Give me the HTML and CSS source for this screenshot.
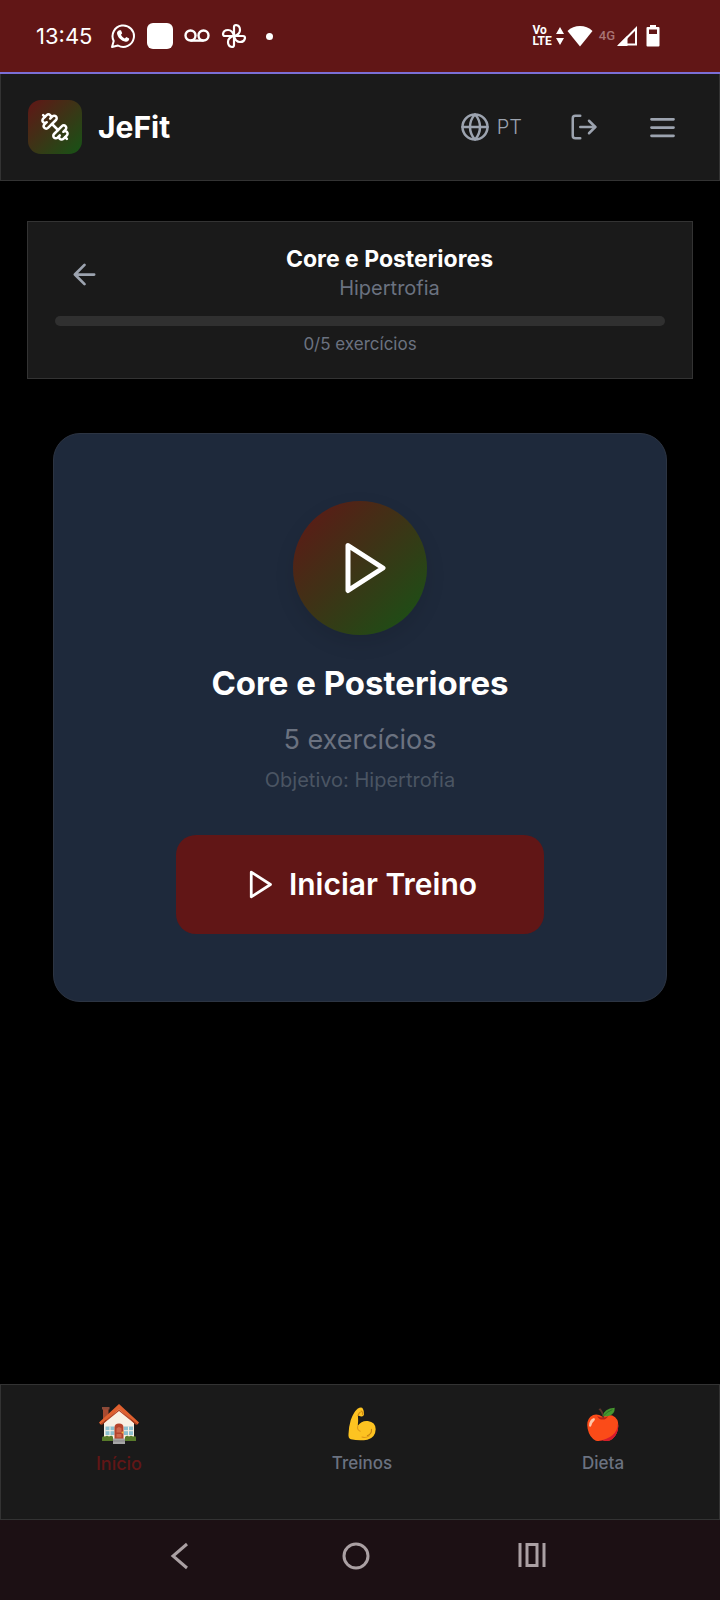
FILE: index.html
```html
<!DOCTYPE html>
<html lang="pt">
<head>
<meta charset="UTF-8">
<meta name="viewport" content="width=device-width, initial-scale=1">
<title>JeFit</title>
<link rel="stylesheet" href="styles.css">
</head>
<body>

<div class="status-bar">
  <div class="status-left">
    <span class="clock">13:45</span>
    <svg width="26" height="26" viewBox="0 0 26 26" fill="none" stroke="#fff" stroke-width="2">
      <path d="M2 24l1.700-6A10.700 10.700 0 1 1 8 22.500z" stroke-linejoin="round"/>
      <path d="M9.300 7.300l1.700 0 1.200 3-1.200 1.500c.9 1.700 2 2.800 3.800 3.700l1.500-1.500 2.900 1.500c.2 2-1.500 3.400-3.500 3.200-4.500-.7-8-4-8.700-8.400 0-1.300.8-2.700 2.300-3z" fill="#fff" stroke="none"/>
    </svg>
    <span class="app-square"></span>
    <svg width="26" height="14" viewBox="0 0 26 14" fill="none" stroke="#fff" stroke-width="2.400">
      <circle cx="6.500" cy="6.500" r="5"/>
      <circle cx="19.500" cy="6.500" r="5"/>
      <path d="M6.500 11.600h13"/>
    </svg>
    <svg width="26" height="26" viewBox="0 0 26 26" fill="none" stroke="#fff" stroke-width="2.200" stroke-linejoin="round">
      <path id="blade" d="M13 13V4q0-2 2-2 4 .5 4 5 0 4.500-6 6z"/>
      <use href="#blade" transform="rotate(90 13 13)"/>
      <use href="#blade" transform="rotate(180 13 13)"/>
      <use href="#blade" transform="rotate(270 13 13)"/>
    </svg>
    <span class="dot"></span>
  </div>
  <div class="status-right">
    <span class="volte">Vo<br>LTE</span>
    <svg class="updown" width="8" height="18" viewBox="0 0 8 18" fill="#fff"><path d="M4 0l4 7H0zM4 18l4-7H0z"/></svg>
    <svg class="wifi" width="26" height="22" viewBox="0 0 26 22" fill="#fff"><path d="M13 21.500L.5 6C7-.8 19-.8 25.500 6z"/></svg>
    <span class="net">4G</span>
    <svg class="signal" width="21" height="20" viewBox="0 0 21 20"><path d="M19 2.500V18.500H3z" fill="none" stroke="#fff" stroke-width="2"/><path d="M0 20L10.500 9.500V20z" fill="#fff"/></svg>
    <svg width="14" height="22" viewBox="0 0 14 22"><path fill="#fff" fill-rule="evenodd" d="M4 0h6v2h2.500q1 0 1 1v17.500q0 1-1 1h-11q-1 0-1-1V3q0-1 1-1H4zM3 4.500V9h8V4.500z"/></svg>
  </div>
</div>

<header class="header">
  <div class="brand">
    <span class="logo">
      <svg width="30" height="30" viewBox="0 0 24 24" class="icon">
        <path d="M14.4 14.4 9.6 9.6"/>
        <path d="M18.657 21.485a2 2 0 1 1-2.829-2.828l-1.767 1.768a2 2 0 1 1-2.829-2.829l6.364-6.364a2 2 0 1 1 2.829 2.829l-1.768 1.767a2 2 0 1 1 2.828 2.829z"/>
        <path d="m21.5 21.5-1.4-1.4"/>
        <path d="M3.9 3.9 2.5 2.5"/>
        <path d="M6.404 12.768a2 2 0 1 1-2.829-2.829l1.768-1.767a2 2 0 1 1-2.828-2.829l2.828-2.828a2 2 0 1 1 2.829 2.828l1.767-1.768a2 2 0 1 1 2.829 2.829z"/>
      </svg>
    </span>
    <h1>JeFit</h1>
  </div>
  <div class="actions">
    <button class="icon-btn lang">
      <svg width="30" height="30" viewBox="0 0 24 24" class="icon">
        <circle cx="12" cy="12" r="10"/>
        <path d="M12 2a14.5 14.5 0 0 0 0 20 14.5 14.5 0 0 0 0-20"/>
        <path d="M2 12h20"/>
      </svg>
      PT
    </button>
    <button class="icon-btn" aria-label="Sair">
      <svg width="30" height="30" viewBox="0 0 24 24" class="icon">
        <path d="M9 21H5a2 2 0 0 1-2-2V5a2 2 0 0 1 2-2h4"/>
        <path d="m16 17 5-5-5-5"/>
        <path d="M21 12H9"/>
      </svg>
    </button>
    <button class="icon-btn" aria-label="Menu">
      <svg width="33" height="33" viewBox="0 0 24 24" class="icon"><path d="M4 6h16M4 12h16M4 18h16"/></svg>
    </button>
  </div>
</header>

<main class="main">
  <section class="progress-panel">
    <div class="progress-top">
      <button class="icon-btn" aria-label="Voltar">
        <svg width="33" height="33" viewBox="0 0 24 24" class="icon"><path d="m12 19-7-7 7-7M19 12H5"/></svg>
      </button>
      <div class="progress-title">
        <h2>Core e Posteriores</h2>
        <p>Hipertrofia</p>
      </div>
    </div>
    <div class="bar" role="progressbar" aria-label="Progresso" aria-valuemin="0" aria-valuemax="5" aria-valuenow="0"></div>
    <p class="count">0/5 exercícios</p>
  </section>

  <section class="card">
    <div class="play-circle">
      <svg width="60" height="60" viewBox="0 0 24 24" class="icon"><path d="M6 3l14 9-14 9z"/></svg>
    </div>
    <h2>Core e Posteriores</h2>
    <p class="total">5 exercícios</p>
    <p class="goal">Objetivo: Hipertrofia</p>
    <button class="start">
      <svg width="33" height="33" viewBox="0 0 24 24" class="icon"><path d="M6 3l14 9-14 9z"/></svg>
      Iniciar Treino
    </button>
  </section>
</main>

<nav class="tabs">
  <a href="#inicio" class="active">
    <svg width="40" height="40" viewBox="0 0 40 40">
      <path d="M4 4h5.500v12H4z" fill="#a84a30"/>
      <path d="M3 3h7.500v2.500H3z" fill="#8c4a38"/>
      <path d="M20 4L5 19v18h30V19z" fill="#f8f0e4"/>
      <path d="M20 0L0 18.500l1.500 2L20 5.500l18.500 15 1.500-2z" fill="#e0602f"/>
      <path d="M1.500 20.500L20 5.500l18.500 15-1.500.3L20 7 3 20.800z" fill="#b9401f"/>
      <path d="M6.500 22.500h9v8.500h-9zM25 22.500h9v8.500h-9z" fill="#8cc0cf"/>
      <path d="M11 22.500v8.500M6.500 26.700h9M29.500 22.500v8.500M25 26.700h9" stroke="#f8f0e4" stroke-width="1"/>
      <path d="M15.500 35V23.500q0-4 4.500-4t4.500 4V35z" fill="#b5432b"/>
      <path d="M17.500 24.500q2.500-3 5 0v4h-5zM17.500 30h5v3.500h-5z" fill="#cf674c"/>
      <circle cx="23.500" cy="28.500" r="1" fill="#f4b742"/>
      <path d="M3 37v-3.500q1-2 3-1 2-1.500 4 0 3-1.500 4 .5v4zM26 37v-4q2-2 4-.5 2-1.500 4 0 3-1 3 1V37z" fill="#587a2a"/>
      <path d="M14 34.500h12V40H14z" fill="#a6a6a6"/>
      <path d="M14 37h12" stroke="#858585"/>
    </svg>
    <span>Início</span>
  </a>
  <a href="#treinos">
    <svg width="40" height="40" viewBox="0 0 40 40">
      <path d="M15 3q4.500-2.500 6 0 1.500 2.500 1.200 6.500-.5 2.500-3.200 2.200l-3.500-1.200q.5 6-.2 11.500 4.200-6 11.200-5.200 8.500 1.200 8.700 9-.2 9.200-9.200 11.700-9 1.500-18.500-.5-3-1.500-2.500-6 .3-8 2.500-15.500Q10.500 7 15 3z" fill="#fdc321"/>
      <path d="M15.300 22.500q-1.300 3.500 2.700 5.500M20 34.500q4 1.500 8-1.300" fill="none" stroke="#e0991a" stroke-width="1.200" stroke-linecap="round"/>
      <path d="M26 33q5-2 4.500-7" fill="none" stroke="#c68110" stroke-width="1.200" stroke-linecap="round"/>
      <path d="M19 5.500q2.500 1 1.500 4M15.500 10.500q1-3 2.500-3.500" fill="none" stroke="#d38a12" stroke-width="1.300" stroke-linecap="round"/>
    </svg>
    <span>Treinos</span>
  </a>
  <a href="#dieta">
    <svg width="40" height="40" viewBox="0 0 40 40">
      <path d="M19.500 12Q12 7 6 12q-5 5-3 13.500Q5 35 12 38.500q4 1 7.500-.5 4 1.500 8 .3 7-3 9-11.800 2-9.500-3-14-5.500-4.500-14-.5z" fill="#fb4b18"/>
      <path d="M36.500 19q0 9-6 13.500-6 5-15.500 6 2.500.3 4.500-.5 4 1.500 8 .3 7-3 9-11.800.7-4 0-7.500z" fill="#d6192e"/>
      <path d="M13.500 11q6 3.500 12.500 0-2.500 4-6.500 4t-6-4z" fill="#b91f18"/>
      <path d="M19.500 13Q19 7 15 3.500l2-1q4 4 4 10.500z" fill="#5b352c"/>
      <path d="M20 11Q21 3 33 2q.5 8-8 9.500-3 0-5-.5z" fill="#46962f"/>
      <path d="M20.500 11Q25 6 30.500 4" fill="none" stroke="#2d6d25" stroke-width="1"/>
      <path d="M4.500 22q0-7 5.500-8.700 2 .7.500 2.700-2.500 2-3.500 6-1.500 2.500-2.500 0z" fill="#ffc5a8"/>
    </svg>
    <span>Dieta</span>
  </a>
</nav>

<div class="system-nav">
  <button aria-label="Voltar">
    <svg width="28" height="28" viewBox="0 0 28 28"><path d="M21 2L7 14l14 12"/></svg>
  </button>
  <button aria-label="Tela inicial">
    <svg width="28" height="28" viewBox="0 0 28 28"><circle cx="14" cy="14" r="12"/></svg>
  </button>
  <button aria-label="Recentes">
    <svg width="28" height="28" viewBox="0 0 28 28"><path d="M2 1v24M26 1v24M9 2.500h10v21H9z"/></svg>
  </button>
</div>

</body>
</html>
```

FILE: styles.css
```css
* {
  box-sizing: border-box;
  margin: 0;
  padding: 0;
}

body {
  display: flex;
  flex-direction: column;
  min-height: 100vh;
  background: #000;
  color: #fff;
  font-family: Inter, "Liberation Sans", sans-serif;
}

button {
  border: none;
  background: none;
  color: inherit;
  font: inherit;
  cursor: pointer;
}

svg {
  display: block;
  flex-shrink: 0;
}

.icon {
  fill: none;
  stroke: currentColor;
  stroke-width: 2;
  stroke-linecap: round;
  stroke-linejoin: round;
}

/* phone status bar */
.status-bar {
  display: flex;
  justify-content: space-between;
  align-items: center;
  height: 74px;
  padding: 0 60px 0 36px;
  background: #611616;
  border-bottom: 2px solid #7b6fd6;
}

.status-left, .status-right {
  display: flex;
  align-items: center;
}

.status-left {
  gap: 11px;
}

.clock {
  margin-right: 7px;
  font-size: 22px;
  line-height: 28px;
}

.app-square {
  width: 26px;
  height: 26px;
  border-radius: 6px;
  background: #fff;
}

.dot {
  width: 7px;
  height: 7px;
  margin-left: 8px;
  border-radius: 50%;
  background: #fff;
}

.volte {
  font: bold 12px/11px Roboto, sans-serif;
}

.updown {
  margin: 0 3px 0 4px;
}

.net {
  margin: 0 2px 0 6px;
  color: #a87474;
  font: 500 13px/20px Roboto, sans-serif;
}

.signal {
  margin-right: 8px;
}

/* app header */
.header {
  display: flex;
  justify-content: space-between;
  align-items: center;
  padding: 26px 27px;
  background: #1a1a1a;
  border: 1px solid #333;
  border-top: none;
}

.brand {
  display: flex;
  align-items: center;
  gap: 16px;
}

.brand h1 {
  font-size: 30px;
  line-height: 40px;
}

.logo {
  display: flex;
  align-items: center;
  justify-content: center;
  width: 54px;
  height: 54px;
  border-radius: 13px;
  background: linear-gradient(135deg, #611616, #165416);
}

.actions {
  display: flex;
  gap: 21px;
}

.icon-btn {
  display: flex;
  align-items: center;
  gap: 7px;
  padding: 10px 13px;
  color: #9ca3af;
}

.lang {
  font-size: 20px;
  font-weight: 300;
}

/* workout */
.main {
  flex: 1;
  padding: 40px 27px;
}

.progress-panel {
  padding: 23px 27px 22px;
  background: #1a1a1a;
  border: 1px solid #333;
  text-align: center;
}

.progress-top {
  display: flex;
  align-items: center;
  margin-bottom: 13px;
}

.progress-title {
  flex: 1;
  line-height: 29px;
}

.progress-title h2 {
  font-size: 23px;
}

.progress-title p {
  color: #6b7280;
  font-size: 20px;
}

.bar {
  height: 10px;
  border-radius: 5px;
  background: #303030;
}

.count {
  margin-top: 6px;
  color: #6b7280;
  font-size: 17px;
  line-height: 24px;
}

.card {
  display: flex;
  flex-direction: column;
  align-items: center;
  margin: 54px 26px 0;
  padding: 67px 27px;
  background: #1e293b;
  border: 1px solid #2c3442;
  border-radius: 27px;
  text-align: center;
}

.play-circle {
  display: flex;
  align-items: center;
  justify-content: center;
  width: 134px;
  height: 134px;
  padding-left: 6px;
  border-radius: 50%;
  background: linear-gradient(135deg, #611616, #165416);
  box-shadow: 0 8px 20px rgba(0, 0, 0, 0.1);
}

.card h2 {
  margin-top: 28px;
  font-size: 33px;
  line-height: 40px;
}

.total {
  margin-top: 17px;
  color: #6b7280;
  font-size: 27px;
  line-height: 40px;
}

.goal {
  margin-top: 6px;
  color: #4b5563;
  font-size: 20px;
  line-height: 28px;
}

.start {
  display: flex;
  align-items: center;
  gap: 13px;
  margin-top: 41px;
  padding: 33px 67px;
  border-radius: 20px;
  background: #611616;
  font-size: 30px;
  font-weight: 600;
  line-height: 33px;
}

/* bottom tabs */
.tabs {
  display: flex;
  justify-content: space-around;
  padding: 19px 0 42px;
  background: #1a1a1a;
  border: 1px solid #333;
}

.tabs a {
  display: flex;
  flex-direction: column;
  align-items: center;
  gap: 7px;
  color: #6b7280;
  font-size: 17px;
  font-weight: 500;
  line-height: 24px;
  text-decoration: none;
}

.tabs svg {
  padding: 2px;
}

.tabs .active {
  color: #611616;
  font-size: 18px;
  line-height: 26px;
}

.tabs .active svg {
  padding: 0;
}

.system-nav {
  display: grid;
  grid-template-columns: repeat(3, 1fr);
  padding: 22px 100px 30px 92px;
  background: #1c1014;
}

.system-nav button {
  display: flex;
  justify-content: center;
}

.system-nav svg {
  fill: none;
  stroke: #aaa0a3;
  stroke-width: 3;
}
```
